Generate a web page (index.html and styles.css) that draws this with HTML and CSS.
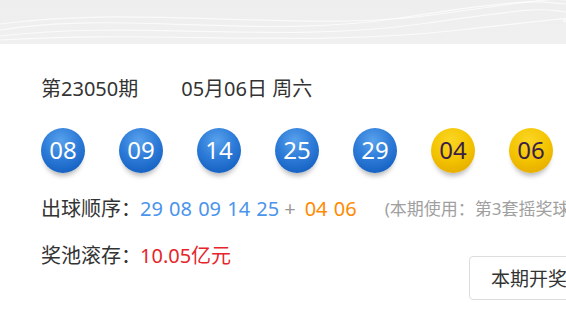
FILE: index.html
```html
<!DOCTYPE html>
<html lang="zh-CN">
<head>
<meta charset="utf-8">
<title>开奖结果</title>
<link rel="stylesheet" href="styles.css">
</head>
<body>
<div class="banner">
  <svg class="waves" width="566" height="44" viewBox="0 0 566 44" preserveAspectRatio="none">
    <path d="M0 30 C120 10 260 40 400 18 S540 2 566 4" />
    <path d="M0 36 C140 20 280 44 420 24 S540 10 566 12" />
    <path d="M0 24 C150 4 300 34 440 14 S550 0 566 0" />
    <path d="M0 40 C160 30 300 48 460 30 S550 20 566 22" />
  </svg>
</div>
<main class="main">
  <div class="issue">
    <span class="issue-no">第23050期</span>
    <span class="issue-date">05月06日 周六</span>
  </div>
  <div class="balls">
    <span class="ball red-ball">08</span>
    <span class="ball red-ball">09</span>
    <span class="ball red-ball">14</span>
    <span class="ball red-ball">25</span>
    <span class="ball red-ball">29</span>
    <span class="ball blue-ball">04</span>
    <span class="ball blue-ball">06</span>
  </div>
  <div class="row order">
    <span class="label">出球顺序：</span>
    <span class="nums front">29 08 09 14 25</span>
    <span class="plus">+</span>
    <span class="nums back">04 06</span>
    <span class="note">(本期使用：第3套摇奖球)</span>
  </div>
  <div class="pool-row">
    <div class="row pool">
      <span class="label">奖池滚存：</span>
      <span class="amount">10.05亿元</span>
    </div>
    <button class="notice-btn" type="button">本期开奖公告</button>
  </div>
</main>
</body>
</html>
```

FILE: styles.css
```css
* { box-sizing: border-box; }

html, body {
  margin: 0;
  padding: 0;
  width: 566px;
  height: 318px;
  overflow: hidden;
  background: #ffffff;
  font-family: "Noto Sans", "Noto Sans CJK SC", sans-serif;
  color: #333333;
}

.banner {
  height: 44px;
  background: linear-gradient(180deg, #eeeeee 0%, #f0f0f0 100%);
  overflow: hidden;
}

.waves {
  display: block;
}

.waves path {
  fill: none;
  stroke: #ffffff;
  stroke-width: 1.2;
  opacity: 0.7;
}

.main {
  padding-left: 41px;
  white-space: nowrap;
}

.issue {
  margin-top: 31px;
  height: 28px;
  line-height: 28px;
  font-size: 20px;
  color: #333333;
  display: flex;
}

.issue-no {
  margin-right: 43px;
}

.balls {
  margin-top: 25px;
  display: flex;
  gap: 34px;
  height: 45px;
}

.ball {
  flex: none;
  width: 44px;
  height: 45px;
  border-radius: 50%;
  display: flex;
  align-items: center;
  justify-content: center;
  font-size: 24px;
  line-height: 1;
  padding-bottom: 1px;
  box-shadow: 0 6px 5px -3px rgba(0, 0, 0, 0.28);
}

.red-ball {
  color: #ffffff;
  background: radial-gradient(circle at 45% 28%, #58a1ec 0%, #2d7bd8 45%, #1a66c6 75%, #0f50a8 100%);
}

.blue-ball {
  color: #3b1f45;
  background: radial-gradient(circle at 45% 28%, #fad624 0%, #f3c300 50%, #e8b000 78%, #d69400 100%);
}

.row {
  display: flex;
  align-items: center;
  height: 28px;
  line-height: 28px;
  font-size: 20px;
}

.balls + .row {
  margin-top: 22px;
}

.label {
  width: 99px;
  flex: none;
  color: #333333;
}

.nums {
  word-spacing: 1px;
}

.front {
  color: #4b94ec;
}

.back {
  color: #ff8a00;
}

.plus {
  color: #999999;
  margin: 0 9px 0 5px;
}

.note {
  margin-left: 28px;
  font-size: 17px;
  color: #a0a0a0;
}

.pool-row {
  margin-top: 19px;
  display: flex;
  align-items: flex-start;
}

.pool {
  width: 428px;
  flex: none;
}

.amount {
  color: #e5252b;
}

.notice-btn {
  flex: none;
  margin-top: 14px;
  height: 44px;
  padding: 0 20px 0 21px;
  border: 1px solid #dddddd;
  border-radius: 4px;
  background: #ffffff;
  font-family: inherit;
  font-size: 19px;
  color: #333333;
  white-space: nowrap;
}
```
